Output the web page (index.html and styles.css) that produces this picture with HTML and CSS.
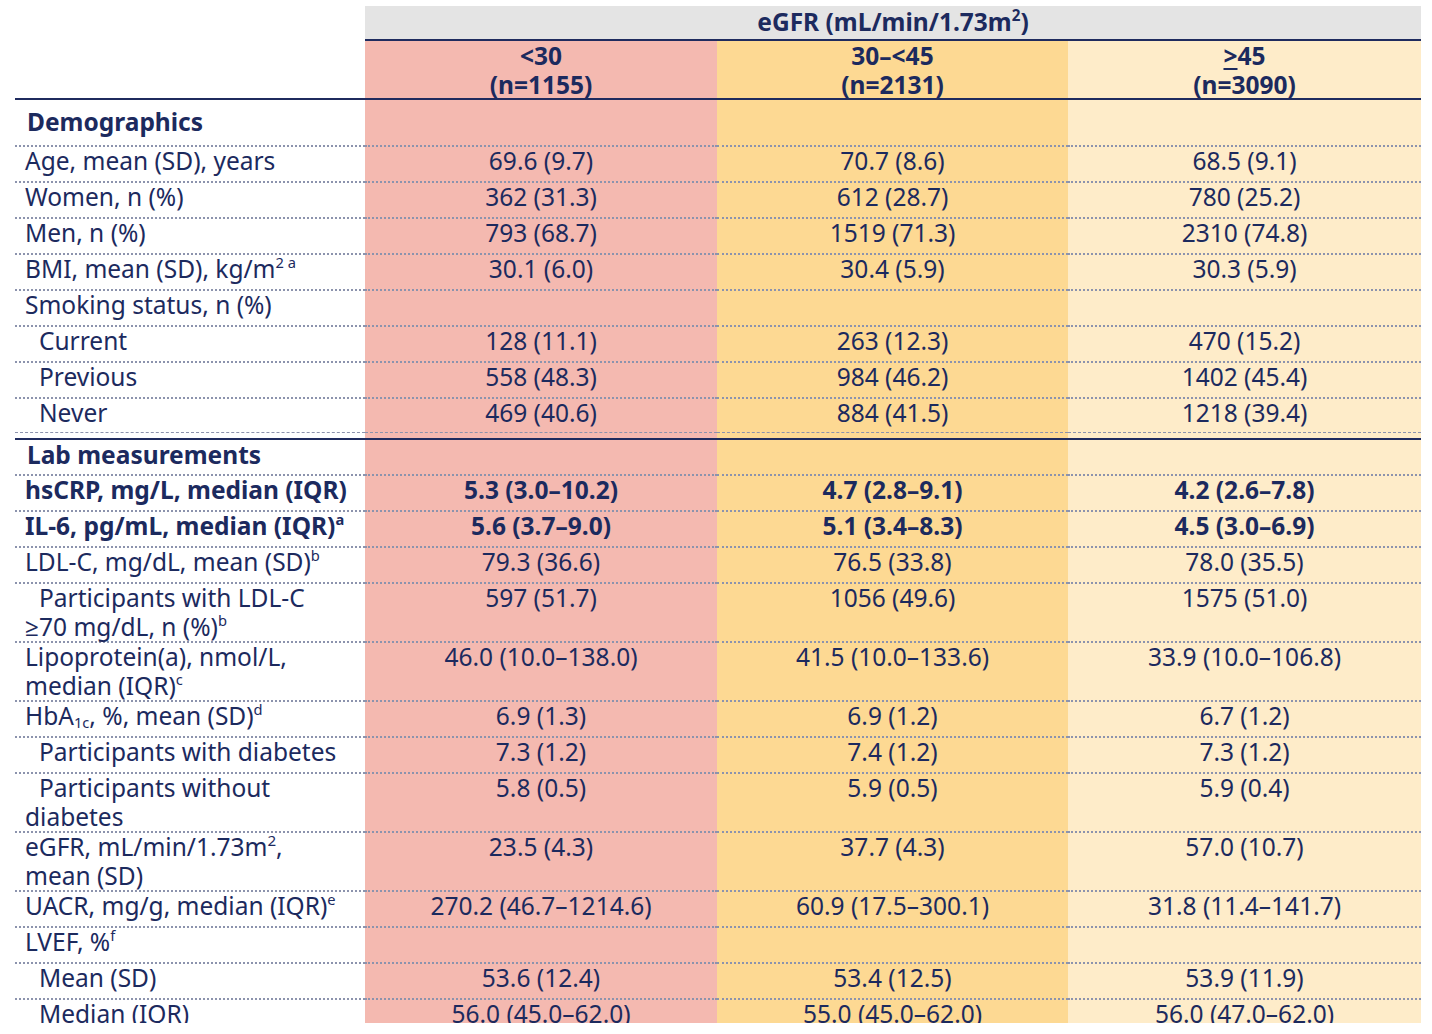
FILE: index.html
```html
<!DOCTYPE html>
<html lang="en">
<head>
<meta charset="utf-8">
<title>Baseline characteristics by eGFR</title>
<link rel="stylesheet" href="styles.css">
</head>
<body>
<div class="frame">
<table class="bt">
  <colgroup>
    <col class="c-label">
    <col class="c-v1">
    <col class="c-v2">
    <col class="c-v3">
  </colgroup>
  <thead>
    <tr class="h-top">
      <th class="blank"></th>
      <th class="group" colspan="3">eGFR (mL/min/1.73m<sup class="s2">2</sup>)</th>
    </tr>
    <tr class="h-cols">
      <th class="blank"></th>
      <th class="v1"><span class="l1">&lt;30</span><span class="l2">(n=1155)</span></th>
      <th class="v2"><span class="l1">30–&lt;45</span><span class="l2">(n=2131)</span></th>
      <th class="v3"><span class="l1"><span class="ul">&gt;</span>45</span><span class="l2">(n=3090)</span></th>
    </tr>
  </thead>
  <tbody>
    <tr class="sec first">
      <td class="lab b">Demographics</td><td class="v1"></td><td class="v2"></td><td class="v3"></td>
    </tr>
    <tr>
      <td class="lab">Age, mean (SD), years</td><td class="v1">69.6 (9.7)</td><td class="v2">70.7 (8.6)</td><td class="v3">68.5 (9.1)</td>
    </tr>
    <tr>
      <td class="lab">Women, n (%)</td><td class="v1">362 (31.3)</td><td class="v2">612 (28.7)</td><td class="v3">780 (25.2)</td>
    </tr>
    <tr>
      <td class="lab">Men, n (%)</td><td class="v1">793 (68.7)</td><td class="v2">1519 (71.3)</td><td class="v3">2310 (74.8)</td>
    </tr>
    <tr>
      <td class="lab">BMI, mean (SD), kg/m<sup>2 a</sup></td><td class="v1">30.1 (6.0)</td><td class="v2">30.4 (5.9)</td><td class="v3">30.3 (5.9)</td>
    </tr>
    <tr>
      <td class="lab">Smoking status, n (%)</td><td class="v1"></td><td class="v2"></td><td class="v3"></td>
    </tr>
    <tr>
      <td class="lab ind">Current</td><td class="v1">128 (11.1)</td><td class="v2">263 (12.3)</td><td class="v3">470 (15.2)</td>
    </tr>
    <tr>
      <td class="lab ind">Previous</td><td class="v1">558 (48.3)</td><td class="v2">984 (46.2)</td><td class="v3">1402 (45.4)</td>
    </tr>
    <tr class="last">
      <td class="lab ind">Never</td><td class="v1">469 (40.6)</td><td class="v2">884 (41.5)</td><td class="v3">1218 (39.4)</td>
    </tr>
    <tr class="gap">
      <td></td><td class="v1"></td><td class="v2"></td><td class="v3"></td>
    </tr>
    <tr class="sec second">
      <td class="lab b">Lab measurements</td><td class="v1"></td><td class="v2"></td><td class="v3"></td>
    </tr>
    <tr class="b">
      <td class="lab">hsCRP, mg/L, median (IQR)</td><td class="v1">5.3 (3.0–10.2)</td><td class="v2">4.7 (2.8–9.1)</td><td class="v3">4.2 (2.6–7.8)</td>
    </tr>
    <tr class="b">
      <td class="lab">IL-6, pg/mL, median (IQR)<sup>a</sup></td><td class="v1">5.6 (3.7–9.0)</td><td class="v2">5.1 (3.4–8.3)</td><td class="v3">4.5 (3.0–6.9)</td>
    </tr>
    <tr>
      <td class="lab">LDL-C, mg/dL, mean (SD)<sup>b</sup></td><td class="v1">79.3 (36.6)</td><td class="v2">76.5 (33.8)</td><td class="v3">78.0 (35.5)</td>
    </tr>
    <tr class="two">
      <td class="lab ind">Participants with LDL-C<br>≥70 mg/dL, n (%)<sup>b</sup></td><td class="v1">597 (51.7)</td><td class="v2">1056 (49.6)</td><td class="v3">1575 (51.0)</td>
    </tr>
    <tr class="two">
      <td class="lab">Lipoprotein(a), nmol/L,<br>median (IQR)<sup>c</sup></td><td class="v1">46.0 (10.0–138.0)</td><td class="v2">41.5 (10.0–133.6)</td><td class="v3">33.9 (10.0–106.8)</td>
    </tr>
    <tr>
      <td class="lab">HbA<sub>1c</sub>, %, mean (SD)<sup>d</sup></td><td class="v1">6.9 (1.3)</td><td class="v2">6.9 (1.2)</td><td class="v3">6.7 (1.2)</td>
    </tr>
    <tr>
      <td class="lab ind">Participants with diabetes</td><td class="v1">7.3 (1.2)</td><td class="v2">7.4 (1.2)</td><td class="v3">7.3 (1.2)</td>
    </tr>
    <tr class="two">
      <td class="lab ind">Participants without<br>diabetes</td><td class="v1">5.8 (0.5)</td><td class="v2">5.9 (0.5)</td><td class="v3">5.9 (0.4)</td>
    </tr>
    <tr class="two">
      <td class="lab">eGFR, mL/min/1.73m<sup class="s2">2</sup>,<br>mean (SD)</td><td class="v1">23.5 (4.3)</td><td class="v2">37.7 (4.3)</td><td class="v3">57.0 (10.7)</td>
    </tr>
    <tr>
      <td class="lab">UACR, mg/g, median (IQR)<sup>e</sup></td><td class="v1">270.2 (46.7–1214.6)</td><td class="v2">60.9 (17.5–300.1)</td><td class="v3">31.8 (11.4–141.7)</td>
    </tr>
    <tr>
      <td class="lab">LVEF, %<sup>f</sup></td><td class="v1"></td><td class="v2"></td><td class="v3"></td>
    </tr>
    <tr>
      <td class="lab ind">Mean (SD)</td><td class="v1">53.6 (12.4)</td><td class="v2">53.4 (12.5)</td><td class="v3">53.9 (11.9)</td>
    </tr>
    <tr>
      <td class="lab ind">Median (IQR)</td><td class="v1">56.0 (45.0–62.0)</td><td class="v2">55.0 (45.0–62.0)</td><td class="v3">56.0 (47.0–62.0)</td>
    </tr>
  </tbody>
</table>
</div>
</body>
</html>
```

FILE: styles.css
```css
html, body {
  margin: 0;
  padding: 0;
  background: #ffffff;
}

body {
  font-family: "Noto Sans", "Open Sans", "DejaVu Sans", sans-serif;
  color: #1c2a5e;
  font-size: 24.5px;
}

.frame {
  margin: 6px 0 0 15px;
  width: 1406px;
  height: 1017px;
  overflow: hidden;
}

.bt {
  border-collapse: separate;
  border-spacing: 0;
  table-layout: fixed;
  width: 1406px;
}

.c-label { width: 350px; }
.c-v1 { width: 352px; }
.c-v2 { width: 351px; }
.c-v3 { width: 353px; }

.v1 { background: #f4b9b0; }
.v2 { background: #fdd993; }
.v3 { background: #feecc9; }

th, td {
  padding: 0 0 6px;
  line-height: 28px;
  text-align: center;
  vertical-align: top;
  white-space: nowrap;
  font-weight: 400;
  border-bottom: 2px dotted #8c93ad;
}

th { font-weight: 700; }

.h-top th {
  padding: 2px 0 3px;
  border-bottom: 2px solid #1f2b5e;
}

.h-top th.blank {
  border-bottom: 2px solid transparent;
  background: #ffffff;
}

.h-top .group {
  background: #e4e4e4;
}

.h-cols th {
  padding: 0;
  border-bottom: 2px solid #1f2b5e;
}

.h-cols .l1 {
  display: block;
  line-height: 30px;
}

.h-cols .l2 {
  display: block;
  line-height: 27px;
}

.ul {
  text-decoration: underline;
  text-decoration-thickness: 2px;
  text-underline-offset: 3px;
}

td.lab {
  text-align: left;
  padding-left: 10px;
}

td.ind { text-indent: 14px; }

.b, .b td { font-weight: 700; }

.sec.first td {
  padding: 8px 0 9px;
}

.sec.first td.lab { padding-left: 12px; }

.sec.second td {
  padding: 1px 0 5px;
}

.sec.second td.lab { padding-left: 12px; }

tr.last td {
  border-bottom: 1px dashed #8c93ad;
  padding-bottom: 5px;
}

tr.gap td {
  height: 5px;
  padding: 0;
  line-height: 0;
  border-bottom: 2px solid #1f2b5e;
}

tr.two td {
  padding: 0;
  line-height: 28.5px;
}

tr.two td.lab { padding-left: 10px; }

sup {
  font-size: 0.6em;
  line-height: 0;
  vertical-align: 0.65em;
}

sup.s2 {
  font-size: 0.62em;
}

sub {
  font-size: 0.6em;
  line-height: 0;
  vertical-align: -0.2em;
}
```
